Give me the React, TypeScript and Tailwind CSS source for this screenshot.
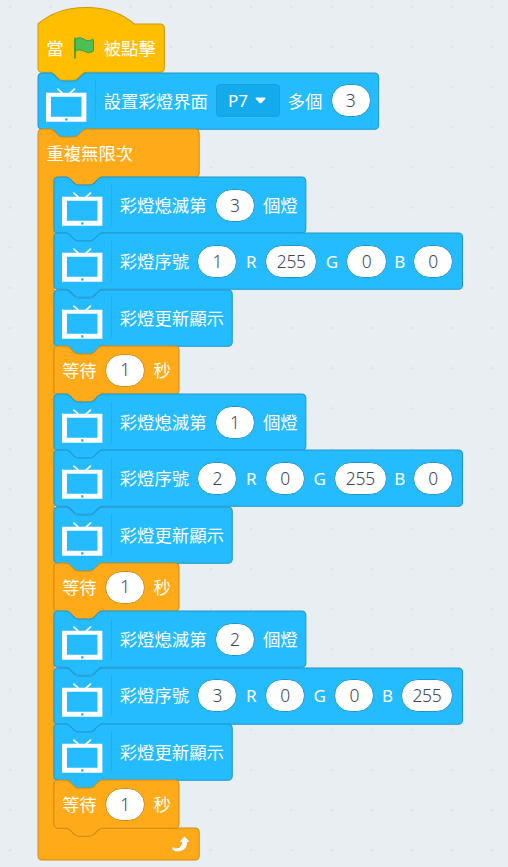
import React from "react";

type Tone = "blue" | "orange" | "yellow";

const fills: Record<Tone, string> = {
  blue: "fill-[#25bbff] stroke-[#1e96cc]",
  orange: "fill-[#ffab19] stroke-[#cf8b17]",
  yellow: "fill-[#ffbf00] stroke-[#cc9900]",
};

const NOTCH = "c2 0 3 1 4 2l4 4c1 1 2 2 4 2h12c2 0 3 -1 4 -2l4 -4c1 -1 2 -2 4 -2";
const TAB = "c-2 0 -3 1 -4 2l-4 4c-1 1 -2 2 -4 2h-12c-2 0 -3 -1 -4 -2l-4 -4c-1 -1 -2 -2 -4 -2";

function stackPath(w: number, h: number) {
  return `M0 4a4 4 0 0 1 4 -4h8${NOTCH}H${w - 4}a4 4 0 0 1 4 4V${h - 4}a4 4 0 0 1 -4 4H48${TAB}H4a4 4 0 0 1 -4 -4z`;
}

function hatPath(w: number, h: number) {
  return `M0 0c25 -22 71 -22 96 0H${w - 4}a4 4 0 0 1 4 4V${h - 4}a4 4 0 0 1 -4 4H48${TAB}H4a4 4 0 0 1 -4 -4z`;
}

function loopPath(w: number, top: number, inner: number, bottom: number) {
  const end = top + inner;
  const h = end + bottom;
  return `M0 4a4 4 0 0 1 4 -4h8${NOTCH}H${w - 4}a4 4 0 0 1 4 4V${top - 4}a4 4 0 0 1 -4 4H64${TAB}h-8a4 4 0 0 0 -4 4V${end - 4}a4 4 0 0 0 4 4h8${NOTCH}H${w - 4}a4 4 0 0 1 4 4V${h - 4}a4 4 0 0 1 -4 4H4a4 4 0 0 1 -4 -4z`;
}

/* Outline of a block; it shares one grid cell with the block's content. */
function Shape({ d, tone }: { d: string; tone: Tone }) {
  return (
    <svg className="col-start-1 row-start-1 h-px w-px overflow-visible" aria-hidden="true">
      <path d={d} className={fills[tone]} transform="scale(1.0042)" />
    </svg>
  );
}

function Label({ children }: { children: React.ReactNode }) {
  return <span className="shrink-0 pt-px text-[17.36px] leading-none">{children}</span>;
}

function Channel({ name }: { name: "R" | "G" | "B" }) {
  const width = { R: "w-[11.4px]", G: "w-[12.8px]", B: "w-[10.2px]" }[name];
  return <span className={`${width} flex shrink-0 justify-center text-[17px] leading-none`}>{name}</span>;
}

function Num({ value, edge = "border-[#1e96cc]" }: { value: string; edge?: string }) {
  const width = value.length > 1 ? "w-[52.4px]" : "w-[40.2px]";
  return (
    <span
      className={`${width} ${edge} flex h-[33px] shrink-0 items-center justify-center rounded-full border bg-white text-[17.4px] font-light leading-none tracking-[-0.2px] text-[#3f455c]`}
    >
      {value}
    </span>
  );
}

function TvIcon() {
  return (
    <>
      <svg className="h-[40.2px] w-[40.2px] shrink-0 overflow-visible" viewBox="0 0 40 40" aria-hidden="true">
        <path d="M0 11.7h40.2v28.9H0zM4.9 15.7v20h30.4v-20z" fill="#fff" fillRule="evenodd" />
        <path d="M11.3 7.6l5 4.4M28.8 7.6l-5 4.4" stroke="#fff" strokeWidth="1.7" />
        <circle cx="20.2" cy="38.2" r="1.3" fill="#25bbff" />
      </svg>
      <span className="h-[41px] w-px shrink-0 bg-[#1faeee]" />
    </>
  );
}

function Block({ width, children }: { width: number; children: React.ReactNode }) {
  return (
    <div className="grid h-[56.3px] grid-rows-1">
      <Shape d={stackPath(width, 56)} tone="blue" />
      <div className="col-start-1 row-start-1 flex items-center gap-[8.1px] pl-2">
        <TvIcon />
        {children}
      </div>
    </div>
  );
}

function Wait() {
  return (
    <div className="grid h-[48.2px] grid-rows-1">
      <Shape d={stackPath(124.5, 48)} tone="orange" />
      <div className="col-start-1 row-start-1 flex items-center gap-[8.3px] pl-[7.6px]">
        <Label>等待</Label>
        <Num value="1" edge="border-[#cf8b17]" />
        <Label>秒</Label>
      </div>
    </div>
  );
}

function Group({ off, index, rgb }: { off: string; index: string; rgb: string[] }) {
  return (
    <>
      <Block width={250.8}>
        <Label>彩燈熄滅第</Label>
        <Num value={off} />
        <Label>個燈</Label>
      </Block>
      <Block width={406.8}>
        <Label>彩燈序號</Label>
        <Num value={index} />
        <Channel name="R" />
        <Num value={rgb[0]} />
        <Channel name="G" />
        <Num value={rgb[1]} />
        <Channel name="B" />
        <Num value={rgb[2]} />
      </Block>
      <Block width={177.5}>
        <Label>彩燈更新顯示</Label>
      </Block>
      <Wait />
    </>
  );
}

function Flag() {
  return (
    <svg className="h-6 w-6 shrink-0" viewBox="0 0 24 24" aria-hidden="true">
      <path
        d="M3.2 3.2c2.8-2 6.2-1.7 9 .2 2.7 1.7 5.6 1.5 8.3.1.6-.3 1 .1 1 .6v10.5c0 .4-.2.6-.5.8-2.9 1.6-6 1.6-8.8-.1-2.8-1.8-6.2-1.9-9 0z"
        fill="#4cbf56"
        stroke="#45993d"
        strokeWidth="1"
      />
      <path d="M3 2.4v19.4" stroke="#45993d" strokeWidth="1.8" strokeLinecap="round" />
    </svg>
  );
}

export default function App() {
  return (
    <main className="flex h-[867px] w-[508px] flex-col overflow-hidden bg-[#e9eef2] bg-[radial-gradient(circle_at_10.3px_6.8px,#dde1e4_0.8px,transparent_1.5px)] bg-[length:40.17px_40.17px] pl-[38.4px] pt-[24.4px] font-['Noto_Sans','Noto_Sans_CJK_TC',sans-serif] text-white">
      <div className="grid h-[48.2px] shrink-0 grid-rows-1">
        <Shape d={hatPath(125.8, 48)} tone="yellow" />
        <div className="col-start-1 row-start-1 flex items-center gap-[8.1px] pl-[7.8px]">
          <Label>當</Label>
          <Flag />
          <Label>被點擊</Label>
        </div>
      </div>
      <Block width={339.2}>
        <Label>設置彩燈界面</Label>
        <span className="flex h-[33px] w-[63.6px] shrink-0 items-center justify-between rounded border border-[#1c9fdc] bg-[#14abed] pl-[11px] pr-[12.5px] text-[17px] leading-none">
          P7
          <svg className="h-[7px] w-[11px]" viewBox="0 0 11 7" aria-hidden="true">
            <path d="M1.5.5h8c1 0 1.2 1 .6 1.6L6.5 6c-.6.6-1.4.6-2 0L.9 2.1C.3 1.5.5.5 1.5.5z" fill="#fff" />
          </svg>
        </span>
        <Label>多個</Label>
        <Num value="3" />
      </Block>
      <div className="grid shrink-0">
        <Shape d={loopPath(160.5, 48, 648, 32)} tone="orange" />
        <div className="col-start-1 row-start-1 flex flex-col">
          <div className="flex h-[48.2px] items-center pl-2">
            <Label>重複無限次</Label>
          </div>
          <div className="flex flex-col pl-4">
            <Group off="3" index="1" rgb={["255", "0", "0"]} />
            <Group off="1" index="2" rgb={["0", "255", "0"]} />
            <Group off="2" index="3" rgb={["0", "0", "255"]} />
          </div>
          <div className="flex h-[32.2px] w-[161px] items-center justify-end pr-2">
            <svg className="h-[18px] w-5" viewBox="0 0 20 18" aria-hidden="true">
              <path
                d="M13.6 1L19.3 7H16.5C16.5 12.6 12.5 16.8 6.8 16.8C4 16.8 1.4 15.8 1 13.2C1 12 2.5 11.8 3.5 12.6C6.5 14.2 10.6 11.8 10.7 7H7.8z"
                fill="#fff"
                stroke="#cf8b17"
                strokeWidth="0.5"
              />
            </svg>
          </div>
        </div>
      </div>
    </main>
  );
}
